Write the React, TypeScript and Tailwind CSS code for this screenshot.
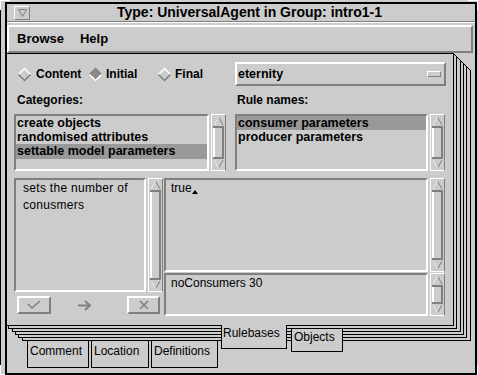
import React from "react";

const raised = "border-2 border-t-white border-l-white border-b-[#7f7f7f] border-r-[#7f7f7f]";
const sunken = "border-2 border-t-[#7f7f7f] border-l-[#7f7f7f] border-b-white border-r-white";

function Diamond({ on }: { on?: boolean }) {
  return (
    <svg width="15" height="15" viewBox="0 0 15 15" className="shrink-0">
      <polygon points="7.5,1.5 13.5,7.5 7.5,13.5 1.5,7.5" fill={on ? "#8a8a8a" : "#cccccc"} />
      <polyline points="1.5,7.5 7.5,1.5 13.5,7.5" fill="none" stroke={on ? "#7f7f7f" : "#ffffff"} strokeWidth="1.5" />
      <polyline points="1.5,7.5 7.5,13.5 13.5,7.5" fill="none" stroke={on ? "#ffffff" : "#7f7f7f"} strokeWidth="1.5" />
    </svg>
  );
}

function Scroll({ h }: { h: string }) {
  return (
    <div className={`w-[15px] ${h} shrink-0 flex flex-col border-l border-l-white border-r border-r-[#7f7f7f] border-t border-t-white border-b border-b-white px-[1px] pt-[1px] pb-[1px]`}>
      <div className="flex justify-center">
        <svg width="11" height="10" viewBox="0 0 11 10">
          <polyline points="1,9 5.5,1 10,9" fill="none" stroke="#7f7f7f" strokeWidth="1" />
          <polyline points="1,9 5.5,1" fill="none" stroke="#ffffff" strokeWidth="1" />
        </svg>
      </div>
      <div className="h-[2px] bg-[#7f7f7f]" />
      <div className="flex-1 border-l-2 border-l-white border-r-2 border-r-[#7f7f7f]" />
      <div className="h-[2px] bg-[#7f7f7f]" />
      <div className="flex justify-center">
        <svg width="11" height="10" viewBox="0 0 11 10">
          <polyline points="1,1 5.5,9 10,1" fill="none" stroke="#7f7f7f" strokeWidth="1" />
          <polyline points="1,1 5.5,9" fill="none" stroke="#ffffff" strokeWidth="1" />
        </svg>
      </div>
    </div>
  );
}

const dx = [0, 3, 7, 10, 13, 17];
const dy = [0, 3, 6, 9, 12, 15];

function Stack() {
  const lines: React.ReactNode[] = [];
  for (let i = 1; i < dx.length; i++) {
    const lx = 5 + dx[i] + 0.5;
    const by = 325 + dy[i] + 0.5;
    const rx = 453 + dx[i] + 0.5;
    const pts = `${lx},${325 + dy[i - 1]} ${lx},${by} ${rx},${by} ${rx},${53 + dx[i]}`;
    lines.push(<polyline key={i} points={pts} fill="none" stroke="#000" strokeWidth="1" />);
  }
  return (
    <svg width="478" height="375" className="absolute inset-0 pointer-events-none" shapeRendering="crispEdges">
      <line x1="0.5" y1="10" x2="0.5" y2="365" stroke="#000" />
      <line x1="453.5" y1="53.5" x2="470.5" y2="70.5" stroke="#000" shapeRendering="auto" />
      {lines}
      <polyline points="0.5,10 0.5,0.5 10,0.5" fill="none" stroke="#fff" />
      <polyline points="468,0.5 477.5,0.5 477.5,10" fill="none" stroke="#fff" />
      <polyline points="0.5,365 0.5,374.5 10,374.5" fill="none" stroke="#fff" />
      <polyline points="468,374.5 477.5,374.5 477.5,365" fill="none" stroke="#fff" />
    </svg>
  );
}

export default function App() {
  return (
    <div className="relative w-[478px] h-[375px] bg-[#cccccc] overflow-hidden pl-[5px] pt-[2px] font-['Liberation_Sans',Arial,sans-serif] text-black">
      <Stack />
      <div className="relative w-[472px] h-[373px] border-2 border-black flex flex-col">
        {/* title bar */}
        <div className="h-[17px] flex items-start shrink-0">
          <div className={`ml-[7px] mt-[2px] w-[16px] h-[14px] border border-t-white border-l-white border-b-[#7f7f7f] border-r-[#7f7f7f] flex items-center justify-center`}>
            <svg width="9" height="8" viewBox="0 0 9 8">
              <polygon points="0.5,0.5 8.5,0.5 4.5,7.5" fill="none" stroke="#7f7f7f" />
            </svg>
          </div>
          <span className="ml-[87px] text-[14px] font-bold leading-[17px] whitespace-nowrap">Type: UniversalAgent in Group: intro1-1</span>
        </div>
        <div className="h-[1px] bg-[#7f7f7f] shrink-0" />
        <div className="h-[1px] bg-white shrink-0" />
        <div className="h-[2px] shrink-0" />
        {/* menu bar */}
        <div className={`h-[28px] mr-[2px] shrink-0 ${raised} flex items-center pl-[8px] gap-[16px] text-[13px] font-bold`}>
          <span>Browse</span>
          <span>Help</span>
        </div>
        {/* notebook */}
        <div className="flex flex-col">
          <div className="w-[447px] h-[272px] border-t border-r border-black flex flex-col">
            {/* row 1 */}
            <div className="mt-[8px] flex items-center">
              <div className="w-[228px] pl-[10px] flex items-center text-[12px] font-bold">
                <div className="w-[71px] flex items-center gap-[4px]"><Diamond /><span>Content</span></div>
                <div className="w-[69px] flex items-center gap-[3px]"><Diamond on /><span>Initial</span></div>
                <div className="flex items-center gap-[3px]"><Diamond /><span>Final</span></div>
              </div>
              <div className={`w-[211px] h-[24px] ${raised} flex items-center justify-between pl-[1px] pr-[3px]`}>
                <span className="text-[12.5px] font-bold">eternity</span>
                <div className="w-[14px] h-[6px] border border-t-white border-l-white border-b-[#7f7f7f] border-r-[#7f7f7f]" />
              </div>
            </div>
            {/* labels */}
            <div className="mt-[7px] flex h-[14px] items-center text-[12px] font-bold leading-[14px]">
              <span className="w-[228px] pl-[10px]">Categories:</span>
              <span className="pl-[2px]">Rule names:</span>
            </div>
            {/* lists */}
            <div className="mt-[7px] flex pl-[7px] h-[57px] text-[12.5px] font-bold leading-[14px]">
              <div className={`w-[195px] h-[57px] ${sunken} flex flex-col`}>
                <div className="pl-[1px] h-[14px]">create objects</div>
                <div className="pl-[1px] h-[14px]">randomised attributes</div>
                <div className="pl-[1px] h-[15px] bg-[#999999]">settable model parameters</div>
              </div>
              <div className="ml-[2px]"><Scroll h="h-[57px]" /></div>
              <div className={`ml-[9px] w-[193px] h-[57px] ${sunken} flex flex-col`}>
                <div className="pl-[1px] h-[14px] bg-[#999999]">consumer parameters</div>
                <div className="pl-[1px] h-[14px]">producer parameters</div>
              </div>
              <div className="ml-[2px]"><Scroll h="h-[57px]" /></div>
            </div>
            {/* lower */}
            <div className="mt-[7px] flex pl-[7px] text-[12px] leading-[17px]">
              <div className="flex flex-col">
                <div className="flex">
                  <div className={`w-[132px] h-[114px] ${sunken} pl-[7px] tracking-[0.3px]`}>
                    <div>sets the number of</div>
                    <div>conusmers</div>
                  </div>
                  <div className="ml-[2px]"><Scroll h="h-[114px]" /></div>
                </div>
                <div className="mt-[4px] flex items-center pl-[3px]">
                  <div className={`w-[34px] h-[18px] ${raised} flex items-center justify-center`}>
                    <svg width="14" height="10" viewBox="0 0 14 10">
                      <polyline points="1,4 5,8 13,1" fill="none" stroke="#7f7f7f" strokeWidth="1.5" />
                    </svg>
                  </div>
                  <div className="ml-[27px] w-[14px] flex items-center justify-center">
                    <svg width="14" height="11" viewBox="0 0 14 11">
                      <line x1="0" y1="5.5" x2="12" y2="5.5" stroke="#7f7f7f" strokeWidth="2" />
                      <polyline points="7,1 12,5.5 7,10" fill="none" stroke="#7f7f7f" strokeWidth="2" />
                    </svg>
                  </div>
                  <div className={`ml-[35px] w-[33px] h-[18px] ${raised} flex items-center justify-center`}>
                    <svg width="10" height="10" viewBox="0 0 10 10">
                      <line x1="1" y1="1" x2="9" y2="9" stroke="#7f7f7f" strokeWidth="1.5" />
                      <line x1="9" y1="1" x2="1" y2="9" stroke="#7f7f7f" strokeWidth="1.5" />
                    </svg>
                  </div>
                </div>
              </div>
              <div className="ml-[1px] flex flex-col gap-[1px]">
                <div className="flex">
                  <div className={`w-[264px] h-[94px] ${sunken} pl-[5px]`}>
                    <span>true</span>
                    <svg width="6" height="4" viewBox="0 0 6 4" className="inline-block relative top-[3px]">
                      <polygon points="0,4 3,0 6,4" fill="#000" />
                    </svg>
                  </div>
                  <div className="ml-[2px]"><Scroll h="h-[94px]" /></div>
                </div>
                <div className="flex">
                  <div className={`w-[264px] h-[43px] ${sunken} pl-[5px]`}>noConsumers 30</div>
                  <div className="ml-[2px]"><Scroll h="h-[43px]" /></div>
                </div>
              </div>
            </div>
          </div>
          {/* tabs */}
          <div className="flex items-start text-[12px] leading-[16px]">
            <div className="w-[214px] flex flex-col">
              <div className="h-[1px] bg-black" />
              <div className="mt-[15px] ml-[20px] flex">
                <div className="w-[62px] h-[27px] border-l border-r border-b border-black bg-[#cccccc] pl-[2px] pt-[2px]">Comment</div>
                <div className="ml-[2px] w-[58px] h-[27px] border-l border-r border-b border-black bg-[#cccccc] pl-[2px] pt-[2px]">Location</div>
                <div className="ml-[2px] w-[67px] h-[27px] border-l border-r border-b border-black bg-[#cccccc] pl-[2px] pt-[2px]">Definitions</div>
              </div>
            </div>
            <div className="w-[66px] h-[24px] border-l border-r border-b border-black bg-[#cccccc] pl-[1px]">Rulebases</div>
            <div className="w-[167px] flex flex-col">
              <div className="h-[1px] bg-black" />
              <div className="mt-[2px] ml-[4px] w-[52px] h-[24px] border border-black bg-[#cccccc] pl-[2px]">Objects</div>
            </div>
          </div>
        </div>
      </div>
    </div>
  );
}
